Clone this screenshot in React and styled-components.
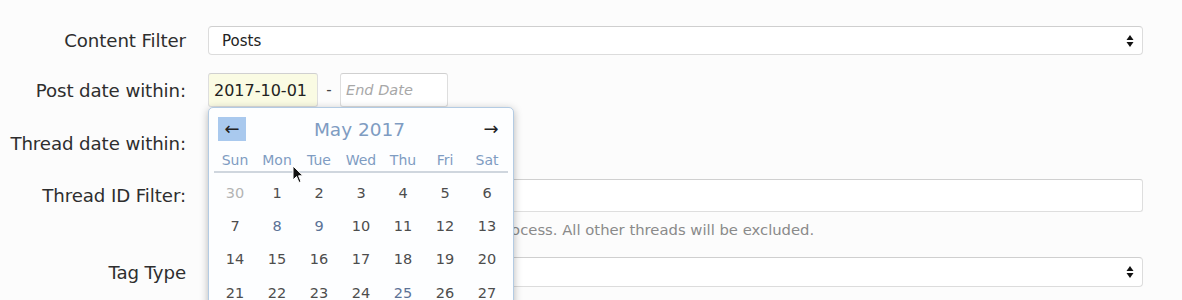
import React from "react";
import styled, { createGlobalStyle } from "styled-components";

const Global = createGlobalStyle`
  html, body { margin: 0; padding: 0; background: #fcfcfc; }
  body { font-family: "DejaVu Sans", "Open Sans", sans-serif; color: #333; }
`;

const Page = styled.div`
  position: relative;
  width: 1182px;
  height: 300px;
  overflow: hidden;
  padding-top: 26px;
  box-sizing: border-box;
`;

const Row = styled.div`
  display: grid;
  grid-template-columns: 186px 935px;
  column-gap: 22px;
  align-items: center;
  margin-bottom: ${(p) => p.$mb || 0}px;
`;

const Label = styled.div`
  text-align: right;
  font-size: 18.2px;
  letter-spacing: -0.1px;
  color: #2e2e2e;
  white-space: nowrap;
`;

const SelectBox = styled.div`
  height: ${(p) => p.$h || 29}px;
  box-sizing: border-box;
  border: 1px solid #dcdcdc;
  border-top-color: #cfcfcf;
  border-radius: 4px;
  background: #fff;
  display: flex;
  align-items: center;
  justify-content: space-between;
  padding: 0 8px 0 13px;
  font-size: 15px;
  color: #222;
`;

const TextInput = styled.div`
  height: ${(p) => p.$h || 32}px;
  box-sizing: border-box;
  border: 1px solid #dedede;
  border-top-color: #d0d0d0;
  border-radius: 3px;
  background: ${(p) => p.$bg || "#fff"};
  width: ${(p) => (p.$w ? p.$w + "px" : "auto")};
  display: flex;
  align-items: center;
  padding: 0 5px;
  font-size: 16px;
  color: #222;
`;

const Placeholder = styled.span`
  font-style: italic;
  font-size: 14.5px;
  color: #a8a8a8;
`;

const DateGroup = styled.div`
  display: flex;
  align-items: center;
`;

const Dash = styled.span`
  width: 22px;
  text-align: center;
  font-size: 15px;
  color: #444;
`;

const Explain = styled.div`
  font-size: 14.8px;
  color: #8a8a8a;
  white-space: nowrap;
`;

const Cell = styled.div``;

const Calendar = styled.div`
  position: absolute;
  left: 208px;
  top: 107px;
  width: 306px;
  height: 230px;
  box-sizing: border-box;
  background: #fdfeff;
  border: 1px solid #b3cbe3;
  border-radius: 5px;
  box-shadow: 0 2px 9px rgba(0, 0, 0, 0.28);
  padding: 9px 5px 0 5px;
`;

const CalHead = styled.div`
  display: flex;
  align-items: center;
  justify-content: space-between;
  height: 24px;
  padding: 0 3px 0 4px;
`;

const NavBtn = styled.div`
  width: 28px;
  height: 24px;
  display: flex;
  align-items: center;
  justify-content: center;
  background: ${(p) => (p.$active ? "#a9c9ee" : "transparent")};
  color: #222;
  font-size: 18px;
  line-height: 1;
`;

const Month = styled.div`
  font-size: 18.5px;
  color: #7f9cc2;
  margin-right: 4px;
`;

const DayNames = styled.div`
  display: grid;
  grid-template-columns: repeat(7, 42px);
  margin-top: 11px;
  padding-bottom: 3px;
  border-bottom: 2px solid #cfd6de;
`;

const DayName = styled.div`
  text-align: center;
  font-size: 14px;
  color: #7f9cc2;
`;

const Days = styled.div`
  display: grid;
  grid-template-columns: repeat(7, 42px);
  grid-auto-rows: 33.3px;
  padding-top: 3px;
`;

const Day = styled.div`
  display: flex;
  align-items: center;
  justify-content: center;
  font-size: 14.5px;
  color: ${(p) => (p.$muted ? "#b4b4b4" : p.$hl ? "#5b7296" : "#4d4d4d")};
`;

const Cursor = styled.svg`
  position: absolute;
  left: 292px;
  top: 165px;
`;

const Arrows = () => (
  <svg width="8" height="14" viewBox="0 0 8 14">
    <path d="M4 1 L7.5 6 H0.5 Z" fill="#111" />
    <path d="M4 13 L7.5 8 H0.5 Z" fill="#111" />
  </svg>
);

const names = ["Sun", "Mon", "Tue", "Wed", "Thu", "Fri", "Sat"];
const days = [30, ...Array.from({ length: 34 }, (_, i) => i + 1)];

export default function App() {
  return (
    <Page>
      <Global />
      <Row $mb={18}>
        <Label>Content Filter</Label>
        <SelectBox>
          <span>Posts</span>
          <Arrows />
        </SelectBox>
      </Row>
      <Row $mb={20}>
        <Label>Post date within:</Label>
        <DateGroup>
          <TextInput $w={110} $h={34} $bg="#fafbe3">2017-10-01</TextInput>
          <Dash>-</Dash>
          <TextInput $w={108} $h={34}>
            <Placeholder>End Date</Placeholder>
          </TextInput>
        </DateGroup>
      </Row>
      <Row $mb={20}>
        <Label>Thread date within:</Label>
        <DateGroup>
          <TextInput $w={110} $h={32} />
          <Dash>-</Dash>
          <TextInput $w={108} $h={32} />
        </DateGroup>
      </Row>
      <Row $mb={9}>
        <Label>Thread ID Filter:</Label>
        <TextInput $h={33} />
      </Row>
      <Row $mb={19}>
        <Cell />
        <Explain>
          Only listed threads are included in the process. All other threads will be excluded.
        </Explain>
      </Row>
      <Row>
        <Label>Tag Type</Label>
        <SelectBox $h={30}>
          <span></span>
          <Arrows />
        </SelectBox>
      </Row>

      <Calendar>
        <CalHead>
          <NavBtn $active>&larr;</NavBtn>
          <Month>May 2017</Month>
          <NavBtn>&rarr;</NavBtn>
        </CalHead>
        <DayNames>
          {names.map((n) => (
            <DayName key={n}>{n}</DayName>
          ))}
        </DayNames>
        <Days>
          {days.map((d, i) => (
            <Day key={i} $muted={i === 0} $hl={d === 8 || d === 9 || (d === 25 && i > 0)}>
              {d}
            </Day>
          ))}
        </Days>
      </Calendar>
      <Cursor width="12" height="19" viewBox="0 0 12 19">
        <path d="M1 1 L1 15 L4.5 11.5 L7 17.5 L9 16.6 L6.6 10.8 L11 10.8 Z" fill="#111" stroke="#fff" strokeWidth="1" />
      </Cursor>
    </Page>
  );
}
